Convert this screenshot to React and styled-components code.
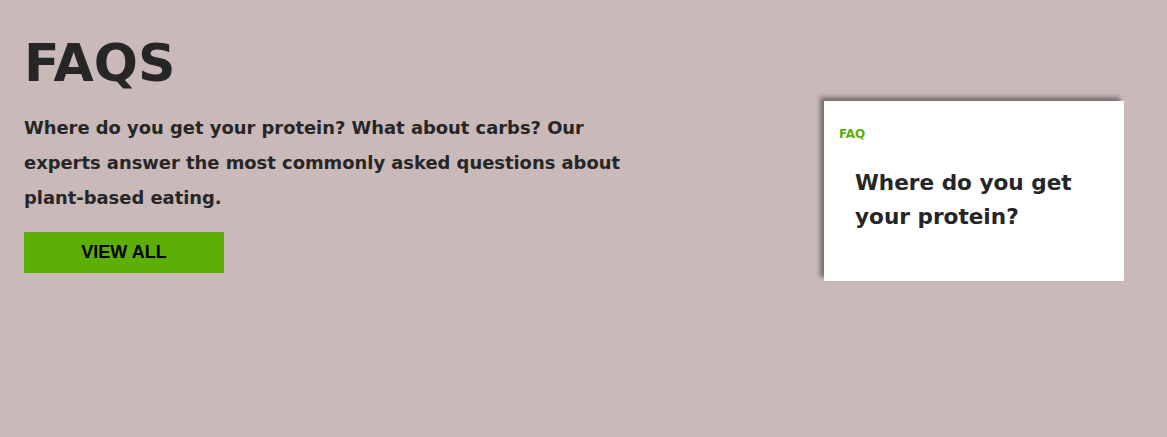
import React from "react";
import styled, { createGlobalStyle } from "styled-components";

const Global = createGlobalStyle`
  html, body {
    margin: 0;
    padding: 0;
    background: #c9b9b9;
  }
  body {
    font-family: "DejaVu Sans", Verdana, sans-serif;
    color: #262626;
  }
`;

const Section = styled.section`
  height: 437px;
  display: flex;
  justify-content: space-between;
  align-items: flex-start;
  padding: 0 43px 0 24px;
  box-sizing: border-box;
`;

const Intro = styled.div`
  width: 610px;
  padding-top: 35px;
`;

const Title = styled.h1`
  margin: 0;
  font-size: 52px;
  line-height: 56px;
  font-weight: bold;
`;

const Lead = styled.p`
  margin: 19px 0 0;
  font-size: 17.9px;
  line-height: 35px;
  font-weight: bold;
`;

const Button = styled.a`
  display: flex;
  align-items: center;
  justify-content: center;
  margin-top: 17px;
  width: 200px;
  height: 41px;
  background: #5dae06;
  color: #000;
  font-family: "Liberation Sans", Arial, sans-serif;
  font-weight: bold;
  font-size: 18px;
  text-decoration: none;
  cursor: pointer;
`;

const Card = styled.div`
  margin-top: 101px;
  width: 300px;
  height: 180px;
  background: #fff;
  box-shadow: -4px -4px 4px #7a7272;
  padding: 26px 15px;
  box-sizing: border-box;
`;

const Tag = styled.div`
  color: #5dae06;
  font-size: 12px;
  font-weight: bold;
`;

const CardTitle = styled.h2`
  margin: 25px 0 0 16px;
  font-size: 21.6px;
  line-height: 34px;
  font-weight: bold;
`;

export default function App() {
  return (
    <>
      <Global />
      <Section>
        <Intro>
          <Title>FAQS</Title>
          <Lead>
            Where do you get your protein? What about carbs? Our experts answer
            the most commonly asked questions about plant-based eating.
          </Lead>
          <Button>VIEW ALL</Button>
        </Intro>
        <Card>
          <Tag>FAQ</Tag>
          <CardTitle>
            Where do you get
            <br />
            your protein?
          </CardTitle>
        </Card>
      </Section>
    </>
  );
}
